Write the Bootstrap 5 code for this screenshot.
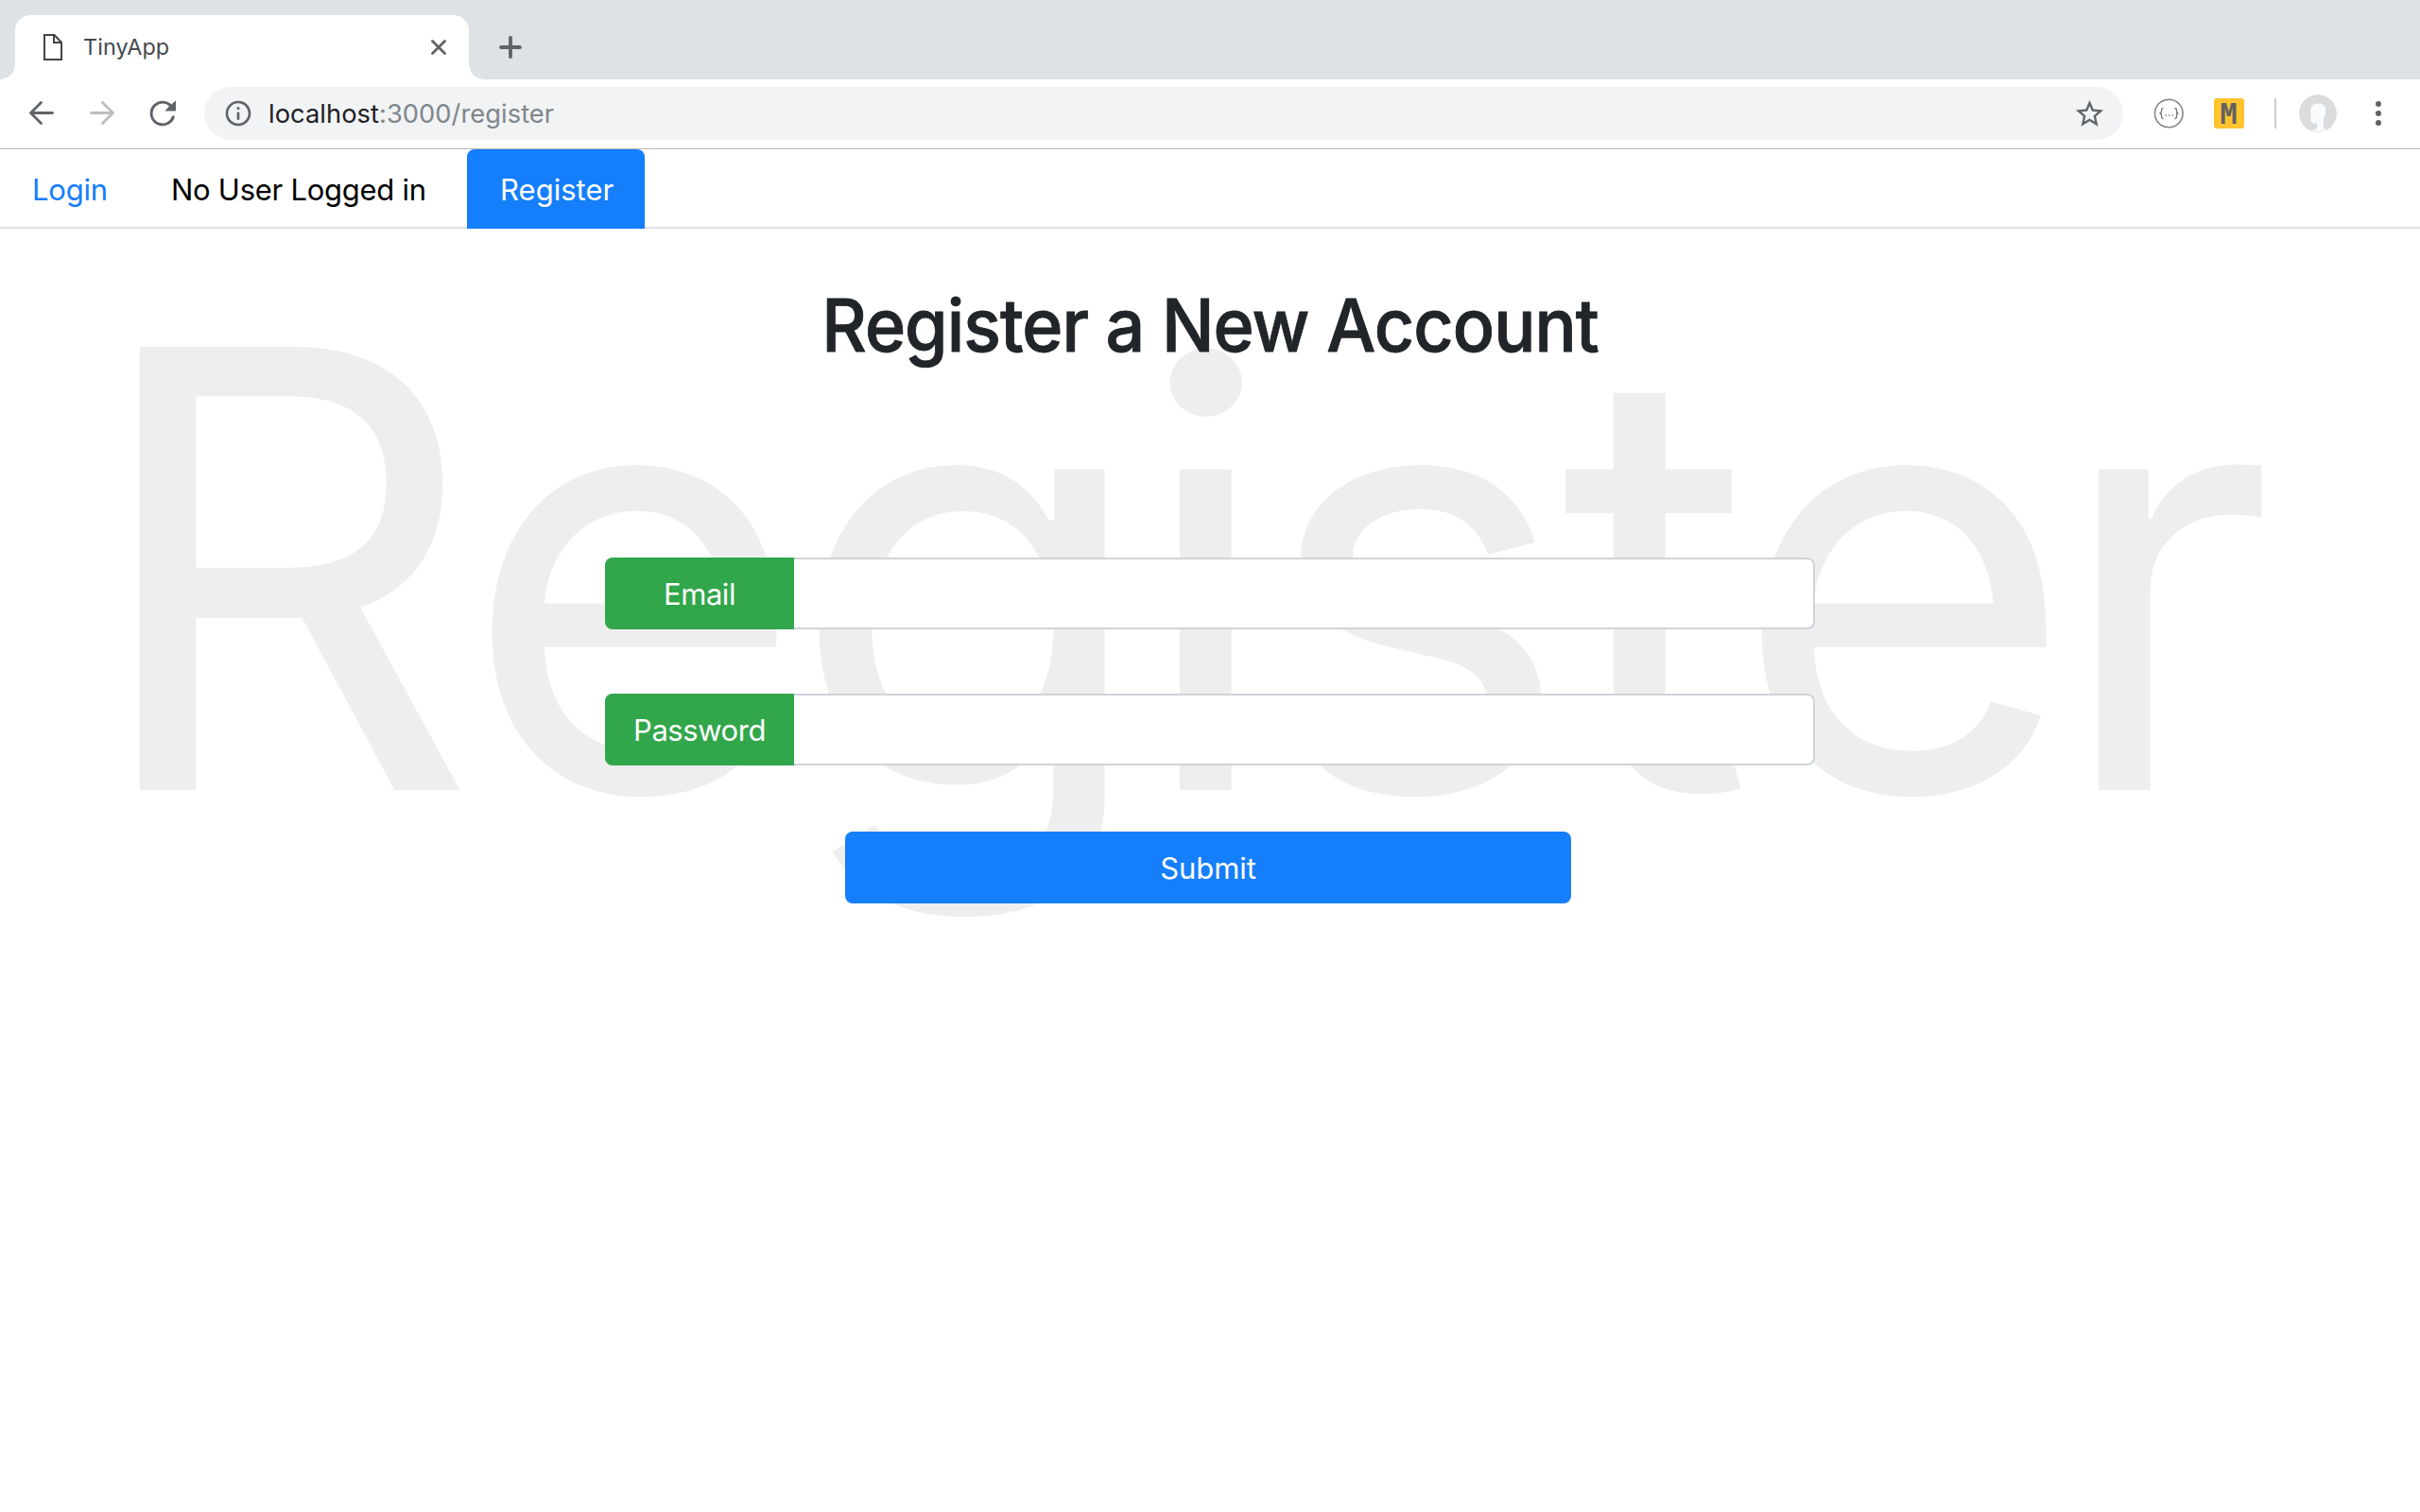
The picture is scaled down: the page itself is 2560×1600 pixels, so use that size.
<!DOCTYPE html>
<html lang="en">
<head>
<meta charset="utf-8">
<title>TinyApp</title>
<link href="https://cdn.jsdelivr.net/npm/bootstrap@5.3.0/dist/css/bootstrap.min.css" rel="stylesheet">
<style>
  html { font-size: 32px; }
  body { font-family: Inter, "Liberation Sans", sans-serif; font-size: 31px; line-height: 48px; color: #212529; background: #fff; height: 1600px; overflow: hidden; }
  svg { display: block; flex: none; }

  /* browser chrome */
  .tab-strip { height: 84px; background: #dee1e6; padding: 16px 0 0 16px; }
  .browser-tab { position: relative; width: 480px; height: 68px; background: #fff; border-radius: 16px 16px 0 0; padding: 0 24px 0 30px; }
  .browser-tab::before, .browser-tab::after { content: ""; position: absolute; bottom: 0; width: 16px; height: 16px; }
  .browser-tab::before { left: -16px; background: radial-gradient(circle at 0 0, transparent 15.5px, #fff 16px); }
  .browser-tab::after { right: -16px; background: radial-gradient(circle at 100% 0, transparent 15.5px, #fff 16px); }
  .tab-title { font-size: 23.4px; letter-spacing: .09px; color: #45494d; margin-left: 22px; }
  .new-tab { margin-left: 32px; }
  .toolbar { height: 74px; border-bottom: 1px solid #b6b6b6; padding: 8px 0 9px 24px; }
  .nav-icon { margin-left: 24px; }
  .omnibox { width: 2030px; height: 56px; background: #f1f3f4; border-radius: 28px; padding: 0 18px 0 20px; margin-left: 24px; font-size: 27.3px; letter-spacing: .04px; color: #202124; }
  .url-text { margin-left: 16px; padding-top: 2px; }
  .url-path { color: #80868b; }
  .ext-icon { margin-left: 32px; }
  .tool-divider { width: 2px; height: 32px; background: #ccc; margin: 0 24px 0 32px; }
  .menu-dots { margin-left: 41px; }

  /* page */
  .page { position: relative; }
  .backdrop-word { position: absolute; left: 0; top: 0; z-index: -1; }
  .page-nav { height: 84px; border-bottom: 2px solid #dee2e6; }
  .page-nav .nav-link { height: 84px; border: 0; border-radius: 8px 8px 0 0; line-height: 48px; padding: 19px 0 17px 34px; font-size: 31px; color: #157efb; }
  .page-nav .link-login { width: 148px; letter-spacing: -.234px; }
  .page-nav .user-status { width: 346px; padding-left: 33px; letter-spacing: -.27px; color: #000; }
  .page-nav .nav-link.active { width: 188px; padding-left: 35px; background: #157efb; color: #fff; letter-spacing: .03px; }
  .page-title { font-size: 77.6px; line-height: 96px; font-weight: 500; letter-spacing: -1px; margin: 54px 0 0; transform: scaleX(.947); -webkit-text-stroke: .9px #212529; }
  .form-stack { padding-top: 198px; }
  .field-row { width: 1280px; height: 76px; margin-bottom: 68px; }
  .field-row .input-group-text { width: 200px; padding: 2px 0 0; font-size: 31px; line-height: 48px; background: #31a64a; color: #fff; border: 0; border-radius: 8px 0 0 8px; letter-spacing: -.45px; }
  .field-row .form-control { margin-left: 0 !important; border: 2px solid #ced4da; border-left: 0; border-radius: 0 8px 8px 0; }
  .submit-btn { width: 768px; height: 76px; margin: 2px 4px 0 0; padding: 2px 0 0; border: 0; border-radius: 8px; font-size: 31px; line-height: 48px; background: #157efb; letter-spacing: -.05px; }
</style>
<script src="https://cdn.jsdelivr.net/npm/bootstrap@5.3.0/dist/js/bootstrap.bundle.min.js"></script>
</head>
<body>
<header>
  <div class="tab-strip d-flex align-items-center">
    <div class="browser-tab d-flex align-items-center">
      <svg width="20" height="28" viewBox="0 0 20 28" fill="none" stroke="#454545" stroke-width="2"><path d="M1 1h10.5L19 9v18H1z"/><path d="M11 1v8h8"/></svg>
      <span class="tab-title">TinyApp</span>
      <svg class="ms-auto" width="16" height="16" viewBox="0 0 16 16" stroke="#5f6368" stroke-width="2.8" stroke-linecap="round"><path d="M1.5 1.5l13 13M14.5 1.5l-13 13"/></svg>
    </div>
    <svg class="new-tab" width="24" height="24" viewBox="0 0 24 24" stroke="#5f6368" stroke-width="3.8" stroke-linecap="round"><path d="M12 2v20M2 12h20"/></svg>
  </div>
  <div class="toolbar d-flex align-items-center">
    <svg width="40" height="40" viewBox="0 0 40 40" fill="none" stroke="#5f6368" stroke-width="2.8" stroke-linecap="round" stroke-linejoin="round"><path d="M31.5 19.5H9M19.5 8.500L8.500 19.500l11 11"/></svg>
    <svg class="nav-icon" width="40" height="40" viewBox="0 0 40 40" fill="none" stroke="#bdbdbf" stroke-width="2.8" stroke-linecap="round" stroke-linejoin="round"><path d="M8.500 19.500H31M20.500 8.500l11 11-11 11"/></svg>
    <svg class="nav-icon" width="40" height="40" viewBox="0 0 24 24" fill="#5f6368"><path d="M17.650 6.350A7.960 7.960 0 0 0 12 4a8 8 0 1 0 7.600 10.500q.2-1-.8-1.100-.8 0-1 .8A6.250 6.250 0 1 1 12 5.750c1.660 0 3.140.69 4.220 1.780L13.400 10.500H20.400V3.800z"/></svg>
    <div class="omnibox d-flex align-items-center">
      <svg width="32" height="32" viewBox="0 0 24 24" fill="#5f6368"><path d="M11 7h2v2h-2zm0 4h2v6h-2zm1-9C6.480 2 2 6.480 2 12s4.480 10 10 10 10-4.480 10-10S17.520 2 12 2zm0 18c-4.410 0-8-3.590-8-8s3.590-8 8-8 8 3.590 8 8-3.590 8-8 8z"/></svg>
      <span class="url-text">localhost<span class="url-path">:3000/register</span></span>
      <svg class="ms-auto" width="35" height="35" viewBox="0 0 24 24" fill="#5f6368"><path d="M22 9.240l-7.190-.62L12 2 9.190 8.630 2 9.240l5.460 4.730L5.820 21 12 17.270 18.180 21l-1.630-7.030L22 9.240zM12 15.400l-3.760 2.270 1-4.280-3.320-2.880 4.380-.38L12 6.100l1.710 4.040 4.380.38-3.320 2.880 1 4.280L12 15.400z"/></svg>
    </div>
    <svg class="ext-icon" width="32" height="32" viewBox="0 0 32 32"><circle cx="16.300" cy="16" r="14.800" fill="none" stroke="#858585" stroke-width="1.600"/><g fill="none" stroke="#777" stroke-width="1.300"><path d="M10.500 10.500q-2 0-2 2v1.500q0 2-2 2 2 0 2 2v1.500q0 2 2 2M22.500 10.500q2 0 2 2v1.500q0 2 2 2-2 0-2 2v1.500q0 2-2 2"/></g><path d="M12.500 18h1.300M16 18h1.300M19.500 18h1.300" stroke="#777" stroke-width="1.300"/></svg>
    <svg class="ext-icon" width="32" height="32" viewBox="0 0 32 32"><rect width="32" height="32" rx="3" fill="#ffc42e"/><text x="6.600" y="27" font-family="DejaVu Sans Mono" font-weight="bold" font-size="30" fill="#616161">M</text></svg>
    <div class="tool-divider"></div>
    <svg width="40" height="40" viewBox="0 0 40 40"><clipPath id="av"><circle cx="20" cy="20" r="20"/></clipPath><g clip-path="url(#av)"><circle cx="20" cy="20" r="20" fill="#dcdcdc"/><path d="M11 38.500c3-1 6-1.500 7-3l1-3c-5-1-7-3-7.200-8V17c0-6 4-8 8.500-8s8.500 2 8.500 8c0 5-2.500 8-2.500 12 0 5 .7 8 3.700 9v2H11z" fill="#f9fafb" stroke="#cfd5db" stroke-width=".8"/><path d="M18 35q2-3 .5-4.500L16 31z" fill="#d2d8de"/></g></svg>
    <svg class="menu-dots" width="6" height="26" viewBox="0 0 6 26" fill="#5f6368"><circle cx="3" cy="3" r="3"/><circle cx="3" cy="13" r="3"/><circle cx="3" cy="23" r="3"/></svg>
  </div>
</header>

<main class="page">
  <svg class="backdrop-word" width="2560" height="860" viewBox="0 158 2560 860" font-family="Inter" fill="#eee"><text y="836"><tspan x="91" font-size="645">R</tspan><tspan x="489 835 1200 1333 1650 1832 2172" font-size="622">egister</tspan></text></svg>
  <nav class="page-nav nav nav-tabs">
    <a class="nav-link link-login" href="#">Login</a>
    <span class="nav-link user-status">No User Logged in</span>
    <a class="nav-link active" href="#">Register</a>
  </nav>
  <h1 class="page-title text-center">Register a New Account</h1>
  <form class="form-stack d-flex flex-column align-items-center">
    <div class="input-group field-row">
      <span class="input-group-text justify-content-center">Email</span>
      <input type="text" class="form-control" aria-label="Email">
    </div>
    <div class="input-group field-row">
      <span class="input-group-text justify-content-center">Password</span>
      <input type="password" class="form-control" aria-label="Password">
    </div>
    <button type="button" class="btn btn-primary submit-btn">Submit</button>
  </form>
</main>
</body>
</html>
